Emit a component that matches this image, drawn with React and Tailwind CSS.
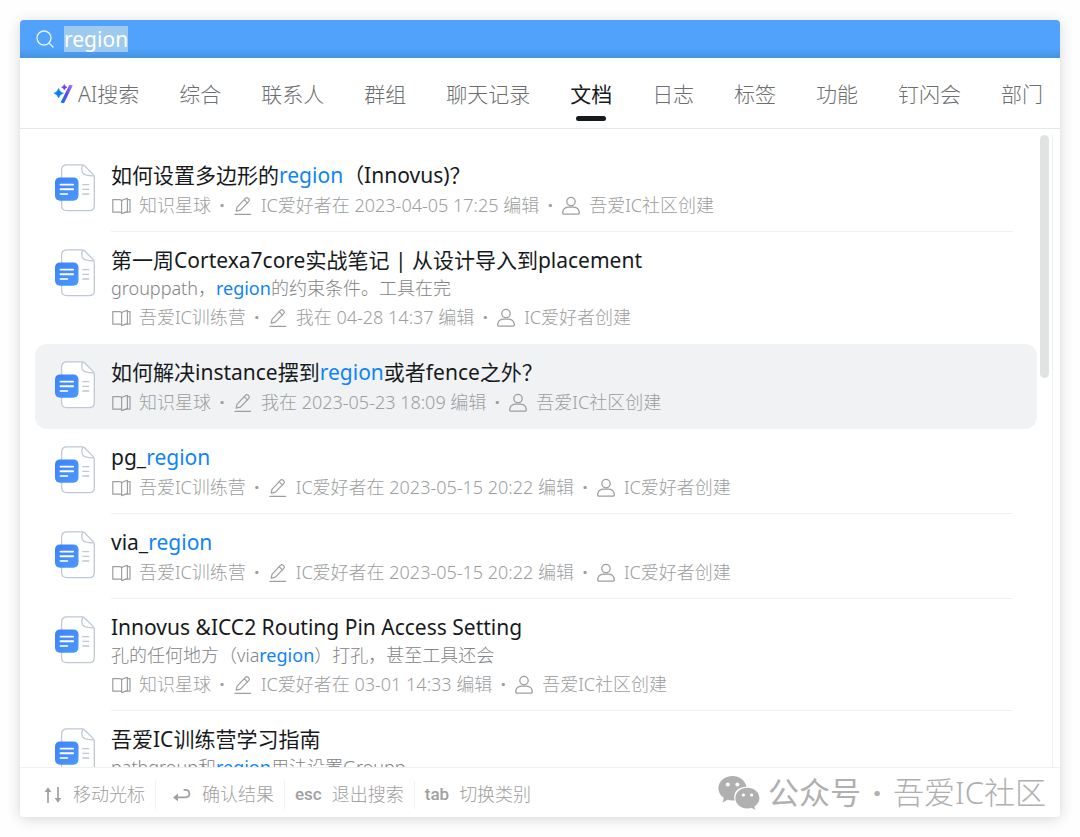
import React from 'react';
import clsx from 'clsx';

const tabs = ['综合', '联系人', '群组', '聊天记录', '文档', '日志', '标签', '功能', '钉闪会', '部门'];

// pieces wrapped in [ ] are the matched keyword
const results = [
  { title: '如何设置多边形的[region]（Innovus)？', space: '知识星球', edited: 'IC爱好者在 2023-04-05 17:25 编辑', author: '吾爱IC社区创建' },
  { title: '第一周Cortexa7core实战笔记 | 从设计导入到placement', desc: 'grouppath，[region]的约束条件。工具在完', space: '吾爱IC训练营', edited: '我在 04-28 14:37 编辑', author: 'IC爱好者创建' },
  { title: '如何解决instance摆到[region]或者fence之外？', space: '知识星球', edited: '我在 2023-05-23 18:09 编辑', author: '吾爱IC社区创建', active: true },
  { title: 'pg_[region]', space: '吾爱IC训练营', edited: 'IC爱好者在 2023-05-15 20:22 编辑', author: 'IC爱好者创建' },
  { title: 'via_[region]', space: '吾爱IC训练营', edited: 'IC爱好者在 2023-05-15 20:22 编辑', author: 'IC爱好者创建' },
  { title: 'Innovus &ICC2 Routing Pin Access Setting', desc: '孔的任何地方（via[region]）打孔，甚至工具还会', space: '知识星球', edited: 'IC爱好者在 03-01 14:33 编辑', author: '吾爱IC社区创建' },
  { title: '吾爱IC训练营学习指南', desc: 'pathgroup和[region]用法设置Groupp' },
];

function Highlight({ text, className }) {
  return text.split(/\[(.+?)\]/).map((part, i) =>
    i % 2 ? <mark key={i} className={clsx('bg-transparent text-[#0f84f8]', className)}>{part}</mark> : part
  );
}

function SearchIcon() {
  return (
    <svg width="18" height="18" viewBox="0 0 18 18" fill="none" stroke="#e6f2ff" strokeWidth="1.4" strokeLinecap="round">
      <circle cx="8" cy="8" r="7" />
      <path d="M13 13l4 4" />
    </svg>
  );
}

function WandIcon() {
  return (
    <svg width="20" height="20" viewBox="0 0 20 20">
      <defs>
        <linearGradient id="wand" x1="0" y1="1" x2="1" y2="0">
          <stop offset="0" stopColor="#0a7cf5" />
          <stop offset="0.5" stopColor="#5f48ea" />
          <stop offset="1" stopColor="#a07cf8" />
        </linearGradient>
      </defs>
      <path d="M15.4 0.8L18.8 1.6L10 19.2L6.6 18.6Z" fill="url(#wand)" />
      <path d="M4.6 4.4Q5.6 8.2 9.4 9.2Q5.6 10.2 4.6 14Q3.6 10.2 0 9.2Q3.6 8.2 4.6 4.4Z" fill="#0a7cf5" stroke="#0a7cf5" strokeWidth="0.6" />
      <path d="M10.3 0.4Q10.9 2.6 13 3.2Q10.9 3.8 10.3 6Q9.7 3.8 7.6 3.2Q9.7 2.6 10.3 0.4Z" fill="#6a45ea" stroke="#6a45ea" strokeWidth="0.5" />
    </svg>
  );
}

function DocIcon() {
  return (
    <svg width="40" height="48" viewBox="0 0 40 48" fill="none" className="shrink-0">
      <defs>
        <linearGradient id="doc" x1="0" y1="0" x2="1" y2="1">
          <stop offset="0" stopColor="#3b82fb" />
          <stop offset="1" stopColor="#4f98fb" />
        </linearGradient>
      </defs>
      <path
        d="M12 0.8H27Q28.6 0.8 29.8 2L38 10.4Q39.3 11.7 39.3 13.5V41.5Q39.3 46.7 34 46.7H12Q6.6 46.7 6.6 41.5V6Q6.6 0.8 12 0.8Z"
        fill="white" stroke="#bfc8d6" strokeWidth="1.3"
      />
      <path d="M28 1.2C26.4 3.4 26.6 6 27.4 8.4C28.4 11 31 11.8 38.8 11.8" stroke="#bfc8d6" strokeWidth="1.3" />
      <path d="M27.3 20.6h7M27.3 25.3h7M27.3 30h7" stroke="#bfc8d6" strokeWidth="1.3" />
      <rect y="13.4" width="23.5" height="23.4" rx="5" fill="url(#doc)" />
      <path d="M5.5 20.6h12.6M5.5 25.3h12.6" stroke="white" strokeWidth="1.9" strokeLinecap="round" />
      <path d="M5.5 30h6.8" stroke="#dbe9ff" strokeWidth="1.9" strokeLinecap="round" />
    </svg>
  );
}

function BookIcon() {
  return (
    <svg width="20" height="18" viewBox="0 0 20 18" fill="none" stroke="currentColor" strokeWidth="1.2" strokeLinejoin="round">
      <path d="M10.6 15.2H1.8V2.6H8.8Q10.6 2.6 10.6 4.4V16.6L16.4 14.6V1.4L12 2.8Q10.6 3.2 10.6 4.6" />
      <path d="M16.4 2.6H19V15.2H14.6" />
    </svg>
  );
}

function PenIcon() {
  return (
    <svg width="20" height="20" viewBox="0 0 20 20" fill="none" stroke="currentColor" strokeWidth="1.2" strokeLinejoin="round" strokeLinecap="round">
      <path d="M4 11.4L12.6 2.2Q13.8 1 15 2.2L15.8 3Q17 4.2 15.8 5.4L7.4 14.2L3.2 15.2Z" />
      <path d="M11.4 3.8L14.4 6.8M2 18.4H17.6" />
    </svg>
  );
}

function PersonIcon() {
  return (
    <svg width="20" height="20" viewBox="0 0 20 20" fill="none" stroke="currentColor" strokeWidth="1.3">
      <circle cx="10" cy="5.6" r="4.2" />
      <path d="M7.2 11.2H12.8C16 11.4 18 13.6 18.3 16.6Q18.4 18.2 16.8 18.2H3.2Q1.6 18.2 1.7 16.6C2 13.6 4 11.4 7.2 11.2Z" />
    </svg>
  );
}

function ArrowsIcon() {
  return (
    <svg width="20" height="18" viewBox="0 0 20 18" fill="none" stroke="currentColor" strokeWidth="1.7">
      <path d="M5 17V3M15 1V15" />
      <path d="M1.6 6L5 1.2L8.4 6ZM11.6 12L15 16.8L18.4 12Z" fill="currentColor" stroke="none" />
    </svg>
  );
}

function ReturnIcon() {
  return (
    <svg width="20" height="16" viewBox="0 0 20 16" fill="none" stroke="currentColor" strokeWidth="1.7">
      <path d="M4 10.4H13.4Q17.4 10.4 17.4 6.6Q17.4 2.8 13.4 2.8H11.6" />
      <path d="M1 10.4L6 6.6V14.2Z" fill="currentColor" stroke="none" />
    </svg>
  );
}

function WechatIcon() {
  return (
    <svg width="42" height="36" viewBox="0 0 42 36" fill="currentColor">
      <path d="M14.6 1C6.6 1 0.4 6.4 0.4 13.2C0.4 17.2 2.4 20.4 5.8 22.8L4.6 27.4L9.6 24.8Q12 25.6 14.6 25.6Q15.6 25.6 16.6 25.4C14.6 17.4 20.4 11.6 28.6 11.8C27 5.4 21.6 1 14.6 1Z" />
      <path d="M29.4 12.8C22.6 12.8 17.4 17.4 17.4 23.2C17.4 29 22.6 33.4 29.4 33.4Q31.6 33.4 33.6 32.8L37.4 35L36.4 31.4C39.6 29.4 41.4 26.6 41.4 23.2C41.4 17.4 36 12.8 29.4 12.8Z" />
      <g fill="white">
        <circle cx="9.8" cy="9.4" r="2" />
        <circle cx="19.4" cy="9.4" r="2" />
        <circle cx="25.4" cy="20" r="1.6" />
        <circle cx="33.6" cy="20" r="1.6" />
      </g>
    </svg>
  );
}

function Dot() {
  return <span className="w-[22px] text-center font-bold">·</span>;
}

function ResultRow({ item, last }) {
  return (
    <li>
      <a href="#" className={clsx('flex gap-4 pl-5 pr-6', item.active && 'bg-[#f0f2f4] rounded-xl')}>
        <div className="pt-[17px]">
          <DocIcon />
        </div>
        <div className={clsx('flex-1 min-w-0 pt-[13px] pb-3 border-b whitespace-nowrap', item.active || last ? 'border-transparent' : 'border-[#f0f1f2]')}>
          <h3 className="text-[21px] leading-[30px] text-[#171a1d]">
            <Highlight text={item.title} />
          </h3>
          {item.desc && (
            <p className="text-[18px] leading-[27px] text-[#828486] font-light">
              <Highlight text={item.desc} className="font-normal" />
            </p>
          )}
          {item.space && (
            <div className="flex items-center pt-0.5 text-[18px] leading-[27px] text-[#9c9ea0] font-light">
              <span className="flex items-center gap-2"><BookIcon />{item.space}</span>
              <Dot />
              <span className="flex items-center gap-2"><PenIcon />{item.edited}</span>
              <Dot />
              <span className="flex items-center gap-2"><PersonIcon />{item.author}</span>
            </div>
          )}
        </div>
      </a>
    </li>
  );
}

function Hint({ keycap, label }) {
  return (
    <div className="flex items-center gap-2.5 px-2.5 border-r border-[#f1f1f1] last:border-r-0 h-7">
      {keycap}
      <span className="text-[18px] font-light">{label}</span>
    </div>
  );
}

export default function App() {
  return (
    <div className="h-screen bg-[#fefefe] p-5 font-['Noto_Sans','Noto_Sans_CJK_SC',sans-serif]">
      <div className="h-full flex flex-col bg-white rounded-sm overflow-hidden shadow-[0_2px_14px_rgba(0,0,0,0.16)]">
        <header className="h-[38px] shrink-0 flex items-center gap-2.5 pl-4 bg-linear-to-b from-[#50a2fb] from-75% to-[#4493e3]">
          <SearchIcon />
          <input
            type="text"
            aria-label="搜索"
            defaultValue="region"
            className="field-sizing-content h-[26px] bg-[#9fcaef] text-white text-[21px] leading-[26px] outline-none"
          />
        </header>

        <nav role="tablist" className="h-[71px] shrink-0 flex items-center justify-between pl-[34px] pr-[17px] pt-0.5 border-b border-[#e6e7e8] text-[21px] leading-[30px] text-[#6c6f71] font-light whitespace-nowrap">
          <button role="tab" className="flex items-center gap-1">
            <WandIcon />
            AI搜索
          </button>
          {tabs.map((tab) => (
            <button
              key={tab}
              role="tab"
              aria-selected={tab === '文档'}
              className={clsx('relative', tab === '文档' && 'text-[#171a1d] font-normal')}
            >
              {tab}
              {tab === '文档' && <span className="absolute left-1/2 -translate-x-1/2 -bottom-3 w-[30px] h-[5px] rounded-full bg-[#171a1d]" />}
            </button>
          ))}
        </nav>

        <main className="flex-1 min-h-0 flex pl-[15px] pr-[7px]">
          <ul className="flex-1 min-w-0 overflow-hidden pt-[18px]">
            {results.map((item, i) => (
              <ResultRow key={item.title} item={item} last={results[i + 1]?.active} />
            ))}
          </ul>
          <div className="w-4 mt-1.5 pl-[3px] border-r border-[#eeefef]">
            <div className="w-[9px] h-[243px] rounded-full bg-[#e1e3e3]" />
          </div>
        </main>

        <footer className="h-[50px] shrink-0 flex items-center justify-between pl-[13px] pr-3.5 border-t border-[#f0f0f0] text-[#a0a0a0] whitespace-nowrap">
          <div className="flex items-center pt-1">
            <Hint keycap={<ArrowsIcon />} label="移动光标" />
            <Hint keycap={<span className="pl-1.5"><ReturnIcon /></span>} label="确认结果" />
            <Hint keycap={<kbd className="font-['Roboto',sans-serif] font-medium text-[17px]">esc</kbd>} label="退出搜索" />
            <Hint keycap={<kbd className="font-['Roboto',sans-serif] font-medium text-[17px]">tab</kbd>} label="切换类别" />
          </div>
          <div className="flex items-center gap-2 text-[#b0b0b0] text-[31px] leading-none">
            <WechatIcon />
            <div className="flex">
              公众号<span className="w-8 text-center font-bold">·</span><span className="font-light">吾爱IC社区</span>
            </div>
          </div>
        </footer>
      </div>
    </div>
  );
}
